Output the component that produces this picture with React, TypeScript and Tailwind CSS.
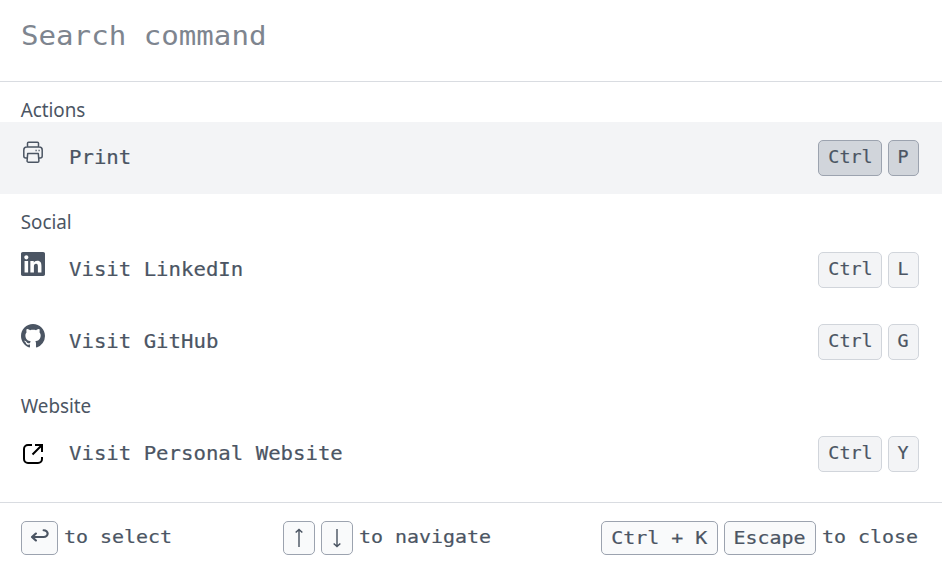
import type { ReactNode } from "react";
import { BsGithub } from "react-icons/bs";
import { SiLinkedin } from "react-icons/si";

function PrinterIcon() {
  return (
    <svg width="24" height="24" viewBox="0 0 24 24" fill="none" stroke="currentColor" strokeWidth="1.5" strokeLinejoin="round">
      <path d="M6.500 7V3.200a1 1 0 0 1 1-1h9a1 1 0 0 1 1 1V7M6 18H4.800a2 2 0 0 1-2-2v-6a3 3 0 0 1 3-3h12.400a3 3 0 0 1 3 3v6a2 2 0 0 1-2 2H18" />
      <path d="M6.700 13.500h10.600l.6 7.400a1.300 1.300 0 0 1-1.300 1.300H7.400a1.300 1.300 0 0 1-1.300-1.300z" />
      <path d="M14.500 10.500h1.200M17.500 10.500h1.200" />
    </svg>
  );
}

function ExternalIcon() {
  return (
    <svg width="24" height="24" viewBox="0 0 24 24" fill="none" stroke="black" strokeWidth="2">
      <path d="M11 3H7a4 4 0 0 0-4 4v10a4 4 0 0 0 4 4h10a4 4 0 0 0 4-4v-2M14 3h7v7M21 3l-9.500 9.500" />
    </svg>
  );
}

function ReturnIcon() {
  return (
    <svg width="18" height="18" viewBox="0 0 18 18" fill="none" stroke="currentColor" strokeWidth="2" strokeLinecap="round" strokeLinejoin="round">
      <path d="M5.300 4.500 1.800 8l3.500 3.500M2.300 8h10a3.600 3.400 0 0 0 0-6.800" />
    </svg>
  );
}

function ArrowIcon({ down = false }: { down?: boolean }) {
  return (
    <svg width="10" height="20" viewBox="0 0 10 20" fill="none" stroke="currentColor" strokeWidth="1.3" className={down ? "rotate-180" : ""}>
      <path d="M5 19V1.500M2 4.500l3-3 3 3" />
    </svg>
  );
}

function GroupLabel({ children }: { children: ReactNode }) {
  return (
    <div className="h-10 origin-left scale-x-[0.94] pl-[22px] pt-[14px] font-['Noto_Sans',sans-serif] text-[20px] leading-[28px]">
      {children}
    </div>
  );
}

function Key({ children, active = false, className }: { children: ReactNode; active?: boolean; className: string }) {
  return (
    <kbd
      className={`flex h-9 items-center justify-center rounded-[5px] border font-['DejaVu_Sans_Mono',monospace] text-[17px] ${className} ${
        active ? "border-[#9ca3af] bg-[#d1d5db]" : "border-[#d1d5db] bg-[#f3f4f6]"
      }`}
    >
      <span className="inline-block scale-x-[1.08] [-webkit-text-stroke:0.2px]">{children}</span>
    </kbd>
  );
}

function Row({ icon, label, shortcut, active = false, centered = false }: { icon: ReactNode; label: string; shortcut: string; active?: boolean; centered?: boolean }) {
  return (
    <div className={`flex h-[72px] items-start pl-[21px] pr-[23px] pt-[18px] ${active ? "bg-[#f3f4f6]" : ""}`}>
      <div className={`w-[47.500px] ${centered ? "pt-[6px]" : ""}`}>{icon}</div>
      <div className="flex-1 origin-left scale-x-[1.088] pt-[1px] text-[19px] leading-8 [-webkit-text-stroke:0.2px]">{label}</div>
      <div className="flex gap-[6px]">
        <Key active={active} className="w-16">Ctrl</Key>
        <Key active={active} className="w-[31px]">{shortcut}</Key>
      </div>
    </div>
  );
}

function FooterKey({ children, className }: { children: ReactNode; className: string }) {
  return (
    <kbd className={`flex h-[34px] shrink-0 items-center justify-center rounded-[5px] border border-[#9ca3af] bg-[#f9fafb] pb-px font-['DejaVu_Sans_Mono',monospace] text-[18px] ${className}`}>
      <span className="inline-block scale-x-[1.107] [-webkit-text-stroke:0.2px]">{children}</span>
    </kbd>
  );
}

function Hint({ keys, children, className }: { keys: ReactNode; children: ReactNode; className: string }) {
  return (
    <div className="flex items-start gap-[6px]">
      <div className="flex gap-[6px]">{keys}</div>
      <span className={`origin-left scale-x-[1.107] pt-[1px] text-[18px] leading-[29px] [-webkit-text-stroke:0.2px] ${className}`}>{children}</span>
    </div>
  );
}

export default function App() {
  return (
    <div className="flex h-[573px] w-[942px] flex-col overflow-hidden whitespace-pre bg-white font-['DejaVu_Sans_Mono',monospace] text-[#4b5563]">
      <header className="h-[82px] border-b border-[#d9dce1] pl-[20.5px] pt-[16px] text-[26px] leading-[40px] text-[#7e858f]">
        <span className="inline-block origin-left scale-x-[1.12]">Search command</span>
      </header>
      <main className="h-[420px]">
        <GroupLabel>Actions</GroupLabel>
        <Row icon={<PrinterIcon />} label="Print" shortcut="P" active />
        <GroupLabel>Social</GroupLabel>
        <Row icon={<SiLinkedin size={24} />} label="Visit LinkedIn" shortcut="L" />
        <Row icon={<BsGithub size={24} />} label="Visit GitHub" shortcut="G" />
        <GroupLabel>Website</GroupLabel>
        <Row icon={<ExternalIcon />} label="Visit Personal Website" shortcut="Y" centered />
      </main>
      <footer className="flex flex-1 items-start justify-between border-t border-[#d9dce1] pl-[21px] pr-[23px] pt-[18px]">
        <Hint className="w-[110px]" keys={<FooterKey className="w-[37px]"><ReturnIcon /></FooterKey>}>to select</Hint>
        <Hint className="w-[133px]" keys={<><FooterKey className="w-8"><ArrowIcon /></FooterKey><FooterKey className="w-8"><ArrowIcon down /></FooterKey></>}>to navigate</Hint>
        <Hint className="w-[97px]" keys={<><FooterKey className="w-[117px]">Ctrl + K</FooterKey><FooterKey className="w-[92px]">Escape</FooterKey></>}>to close</Hint>
      </footer>
    </div>
  );
}
